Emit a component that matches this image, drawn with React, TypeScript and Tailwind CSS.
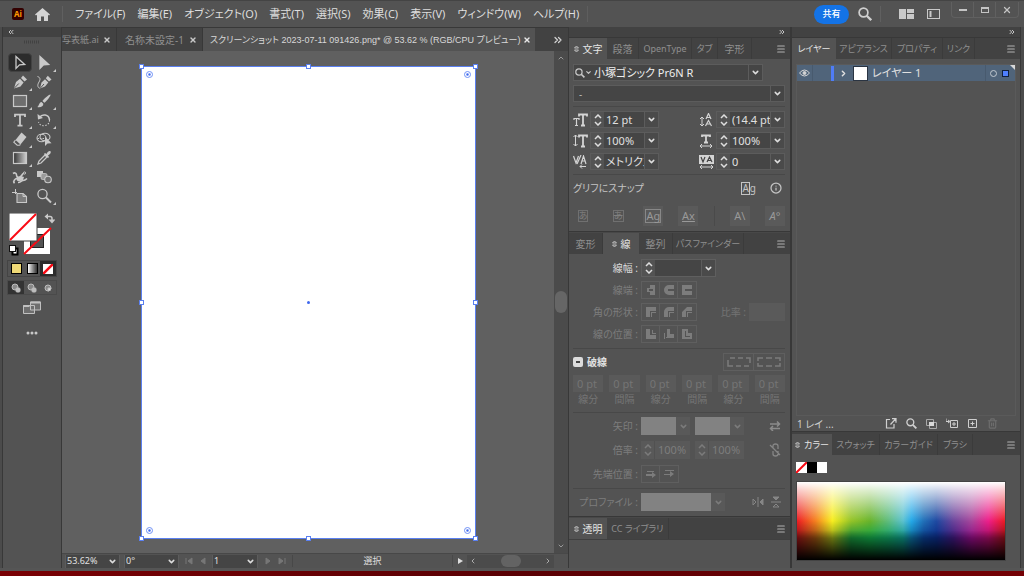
import React from 'react'
import {
  ChevronDown,
  ChevronLeft,
  ChevronRight,
  ChevronUp,
  ChevronsLeft,
  ChevronsRight,
  Info,
  Menu,
  Trash2,
  X
} from 'lucide-react'

const MENU_ITEMS = [
  'ファイル(F)',
  '編集(E)',
  'オブジェクト(O)',
  '書式(T)',
  '選択(S)',
  '効果(C)',
  '表示(V)',
  'ウィンドウ(W)',
  'ヘルプ(H)'
]

const Magnifier: React.FC<{ className: string }> = ({ className }) => (
  <svg viewBox="0 0 14 14" className={className} fill="none" stroke="currentColor" strokeWidth="1.700">
    <circle cx="5.500" cy="5.500" r="4.400" />
    <path d="M8.700 8.700l4.500 4.500" strokeWidth="2.300" />
  </svg>
)

interface ToolIconProps {
  name: string
}

const ToolIcon: React.FC<ToolIconProps> = ({ name }) => (
  <svg viewBox="0 0 16 16" className="w-4 h-4" fill="none" stroke="#c9c9c9" strokeWidth="1.3">
    {name === 'select' && <path d="M4 1.5v12l3.5-3.6 5.2-.4z" />}
    {name === 'direct' && <path d="M4 1.5v12l3.5-3.6 5.2-.4z" fill="#c9c9c9" />}
    {name === 'pen' && (
      <>
        <path d="M2 14.5L4 8l4-3.2 3.6 3.6L8.500 12.5z" fill="#c9c9c9" stroke="none" />
        <path d="M9 4l2-2.500 4 4L12.500 7.500z" fill="#c9c9c9" stroke="none" />
        <path d="M2 14.500L6.800 9.500" stroke="#535353" strokeWidth="1" />
      </>
    )}
    {name === 'curve' && (
      <>
        <path d="M4 14.500L5.500 8.500l3.500-3.200 3.300 3.300-3.300 3.800z" fill="#c9c9c9" stroke="none" />
        <path d="M9.800 4.300l2-2.500 3.700 3.700-2.500 2z" fill="#c9c9c9" stroke="none" />
        <path d="M1.500 2.500c3 1 3 3 1.500 5.500s-2 5 1 6.500" strokeWidth="1" />
        <path d="M4 14.500L8 10" stroke="#535353" strokeWidth="1" />
      </>
    )}
    {name === 'rect' && <rect x="1.500" y="2.500" width="13" height="11" fill="#6e6e6e" strokeWidth="1.200" />}
    {name === 'brush' && (
      <>
        <path d="M14.500 1.500c-1-.6-7.500 5-8 6.500l1.800 1.800C10 9 15.300 2.500 14.500 1.500z" fill="#c9c9c9" stroke="none" />
        <path d="M5.600 9l1.700 1.700c.3 2.500-2.600 4-6 3.300 2-1 1.500-4.500 4.300-5z" fill="#c9c9c9" stroke="none" />
      </>
    )}
    {name === 'type' && <path d="M3 5V2.700h10V5M8 2.700v11M5.500 13.700h5" strokeWidth="1.800" />}
    {name === 'rotate' && (
      <>
        <path d="M3.500 5.500C6 1.500 13 2 13.500 8" strokeWidth="1.500" />
        <path d="M1.500 2l.5 5.500 5-1.500z" fill="#c9c9c9" stroke="none" />
        <path d="M13.500 8c0 7-9.500 7.500-11 2" strokeDasharray="1.500 1.500" strokeWidth="1.100" />
      </>
    )}
    {name === 'eraser' && (
      <>
        <path d="M9.500 1.500l5 4.500-6 7.500-5-4.500z" fill="#c9c9c9" stroke="none" />
        <path d="M3.500 9L1.800 11.200l3.400 3h2.200L8.500 13.500" strokeWidth="1.100" />
      </>
    )}
    {name === 'shape' && (
      <>
        <ellipse cx="5.500" cy="7" rx="4.500" ry="3.700" strokeWidth="1.100" />
        <ellipse cx="9" cy="6" rx="5" ry="3.700" strokeWidth="1.100" />
        <path d="M1.500 7.500h10" strokeWidth="1" strokeDasharray="1.500 1" />
        <path d="M9 5.500v9.500l2.500-2.600 4-.2z" fill="#c9c9c9" stroke="none" />
      </>
    )}
    {name === 'gradient' && (
      <>
        <defs>
          <linearGradient id="tool-gradient">
            <stop offset="0" stopColor="#333" />
            <stop offset="1" stopColor="#d0d0d0" />
          </linearGradient>
        </defs>
        <rect x="1.500" y="2.500" width="13" height="11" fill="url(#tool-gradient)" strokeWidth="1.200" />
      </>
    )}
    {name === 'dropper' && (
      <>
        <path d="M2 14l1-3 6-6 2 2-6 6z" />
        <path d="M8 4l4 4 1-1-1-1.500c2-1 3.500-3 2.500-4.200S11 2.200 10.500 4L9 3z" fill="#c9c9c9" stroke="none" />
      </>
    )}
    {name === 'puppet' && (
      <>
        <path d="M1 4.500c2-1.500 3.500 0 3.500 1.500S6 9 8 8s2-3 3.500-3.500M1.500 13c1-3 3-4 5-4M6 13.500c3 0 3-2 5-2s3-1 4-2" strokeWidth="1.600" />
        <path d="M4 9.500c2-2 5-2.500 8-1.500l-1 3c-2 1-5 1.500-6 .5z" fill="#c9c9c9" stroke="none" />
        <circle cx="12.500" cy="4" r="1.100" strokeWidth="1" />
        <circle cx="2" cy="13.500" r="1" fill="#c9c9c9" stroke="none" />
      </>
    )}
    {name === 'blend' && (
      <>
        <rect x="1" y="2" width="6" height="6" fill="#c9c9c9" stroke="none" />
        <rect x="5" y="4.500" width="6" height="6" rx="1.500" fill="#9a9a9a" strokeWidth=".8" />
        <circle cx="12" cy="10.500" r="3.300" fill="#6e6e6e" strokeWidth="1.100" />
      </>
    )}
    {name === 'artboard' && (
      <>
        <path d="M0 4.500h5M3.500 1v5" strokeWidth="1" />
        <path d="M5 5.500h6l3.500 3v6H5z" fill="#7d7d7d" strokeWidth="1.100" />
        <path d="M11 5.500v3h3.500" strokeWidth="1" />
      </>
    )}
    {name === 'zoom' && (
      <>
        <circle cx="6.500" cy="6" r="4.600" />
        <path d="M10 9.500l5 5" strokeWidth="2" />
      </>
    )}
  </svg>
)

const TOOLS = [
  { icon: 'select', label: '選択ツール', more: false },
  { icon: 'direct', label: 'ダイレクト選択ツール', more: true },
  { icon: 'pen', label: 'ペンツール', more: true },
  { icon: 'curve', label: '曲線ツール', more: false },
  { icon: 'rect', label: '長方形ツール', more: true },
  { icon: 'brush', label: 'ブラシツール', more: true },
  { icon: 'type', label: '文字ツール', more: true },
  { icon: 'rotate', label: '回転ツール', more: true },
  { icon: 'eraser', label: '消しゴムツール', more: true },
  { icon: 'shape', label: 'シェイプ形成ツール', more: false },
  { icon: 'gradient', label: 'グラデーションツール', more: true },
  { icon: 'dropper', label: 'スポイトツール', more: false },
  { icon: 'puppet', label: 'パペットワープツール', more: false },
  { icon: 'blend', label: 'ブレンドツール', more: false },
  { icon: 'artboard', label: 'アートボードツール', more: false },
  { icon: 'zoom', label: 'ズームツール', more: true }
]

const Toolbar: React.FC = () => (
  <aside className="w-[60px] shrink-0 bg-[#535353] border-x border-[#383838] flex flex-col">
    <div className="h-[10px] bg-[#424242] flex items-center pl-1">
      <ChevronsLeft className="w-2 h-2 text-[#c8c8c8]" strokeWidth={3} />
    </div>
    <div className="h-4 flex justify-center pt-[3px]">
      <svg width="16" height="4" fill="none" stroke="#424242" strokeDasharray="1 1" strokeWidth="3">
        <path d="M0 2h16" />
      </svg>
    </div>
    <div className="grid grid-cols-[24px_24px] pl-[5px]">
      {TOOLS.map((tool, i) => (
        <button
          key={tool.icon}
          aria-label={tool.label}
          className={
            i === 0
              ? 'relative h-[19px] flex items-center justify-center bg-[#2c2c2c] rounded-sm border border-[#424242]'
              : 'relative h-[19px] flex items-center justify-center'
          }
        >
          <ToolIcon name={tool.icon} />
          {tool.more && (
            <svg className="absolute right-0 bottom-0" width="3" height="3">
              <path d="M3 0v3H0z" fill="#c9c9c9" />
            </svg>
          )}
        </button>
      ))}
    </div>

    {/* Fill and stroke */}
    <div className="pl-[6px] pt-2">
      <button aria-label="塗りと線" className="block">
        <svg width="46" height="43" fill="none">
          <rect x="14.500" y="14.500" width="27" height="27" fill="#fff" stroke="#535353" />
          <rect x="21.500" y="21.500" width="13" height="13" fill="#535353" stroke="#222" />
          <path d="M15 41L42 15" stroke="#fa0a14" strokeWidth="2" />
          <rect x="0" y="0" width="28" height="28" fill="#fff" stroke="#444" />
          <path d="M1 27L27 1" stroke="#fa0a14" strokeWidth="2" />
          <path d="M38 3.500h3q2 0 2 2v2" stroke="#c9c9c9" strokeWidth="1.500" />
          <path d="M39 .5v6l-3.500-3zM39.500 6.500h7L43 10.500z" fill="#c9c9c9" />
          <path d="M3.500 35.500h5v6h-5z" fill="#fff" stroke="#000" strokeWidth="2" />
          <rect x=".5" y="32.500" width="6" height="6" fill="#fff" stroke="#111" />
        </svg>
      </button>
    </div>
    <div className="mx-1 mt-1 h-[17px] grid grid-cols-3 border border-[#444]">
      <button aria-label="カラー" className="flex items-center justify-center">
        <span className="w-[11px] h-[11px] bg-[#efd976] border border-black" />
      </button>
      <button aria-label="グラデーション" className="flex items-center justify-center">
        <span className="w-[11px] h-[11px] bg-linear-to-r from-white to-[#333] border border-black" />
      </button>
      <button aria-label="なし" className="flex items-center justify-center bg-[#2c2c2c]">
        <svg width="10" height="10">
          <rect width="10" height="10" fill="#fff" />
          <path d="M0 10L10 0" stroke="#fa0a14" strokeWidth="2.500" />
        </svg>
      </button>
    </div>
    <div className="mx-1 mt-[3px] h-[15px] grid grid-cols-3 border border-[#4a4a4a]">
      {['標準描画', '背面描画', '内側描画'].map((label, i) => (
        <button
          key={label}
          aria-label={label}
          className={i === 0 ? 'flex items-center justify-center bg-[#333]' : 'flex items-center justify-center'}
        >
          <svg width="10" height="10" fill="#888" stroke="#bdbdbd">
            <circle cx={i === 2 ? 5 : 4} cy={i === 2 ? 5 : 4} r="3" />
            {i === 2 ? <path d="M5 5h3a3 3 0 0 1-3 3z" fill="#ddd" /> : <rect x="5" y="5" width="4" height="4" rx="1" fill="#bdbdbd" />}
          </svg>
        </button>
      ))}
    </div>
    <button aria-label="スクリーンモード" className="mt-[6px] flex justify-center">
      <svg width="18" height="14" fill="#6e6e6e" stroke="#c0c0c0">
        <path d="M.5 4.500h11v8H.5zM7.500 1h10v8h-10z" />
        <path d="M.5 5h6M7.500 1.500h10" strokeWidth="2" />
      </svg>
    </button>
    <button aria-label="ツールバーを編集" className="mt-4 flex justify-center">
      <svg width="12" height="4" fill="#c9c9c9">
        <circle cx="2" cy="2" r="1.500" />
        <circle cx="6" cy="2" r="1.500" />
        <circle cx="10" cy="2" r="1.500" />
      </svg>
    </button>
  </aside>
)

const Handle: React.FC<{ className: string }> = ({ className }) => (
  <span className={`absolute w-[5px] h-[5px] bg-white border border-[#5b80f0] ${className}`} />
)

const CornerWidget: React.FC<{ className: string }> = ({ className }) => (
  <svg className={`absolute ${className}`} width="7" height="7" fill="none" stroke="#6f90f5">
    <circle cx="3.500" cy="3.500" r="3" />
    <circle cx="3.500" cy="3.500" r="1" fill="#3f68ee" />
  </svg>
)

const StatusSelect: React.FC<{ label: string; value: string; width: string }> = ({ label, value, width }) => (
  <div className={`grid items-center h-[13px] bg-[#454545] border-x border-[#5c5c5c] ${width}`}>
    <select aria-label={label} className="[grid-area:1/1] appearance-none w-full h-[13px] pl-[1px] text-[9px] leading-3 text-[#e0e0e0] outline-none">
      <option>{value}</option>
    </select>
    <ChevronDown className="[grid-area:1/1] justify-self-end mr-[2px] w-[9px] h-[9px] text-[#ddd] pointer-events-none" strokeWidth={4} />
  </div>
)

const NavIcon: React.FC<{ label: string; d: string }> = ({ label, d }) => (
  <button aria-label={label} className="w-[14px] flex justify-center">
    <svg width="8" height="8" fill="#777" stroke="#777">
      <path d={d} />
    </svg>
  </button>
)

const DocumentArea: React.FC = () => (
  <main className="flex-1 min-w-0 flex flex-col bg-[#424242]">
    <div role="tablist" className="h-6 flex items-stretch text-[10px] leading-4 text-[#909090] border-t border-[#383838]">
      <div className="w-[55px] shrink-0 flex items-center justify-between pr-[5px] border-r border-[#383838]">
        <button role="tab" aria-selected={false} className="whitespace-nowrap text-[9px]">
          写表紙.ai
        </button>
        <X className="w-2 h-2 text-[#c8c8c8]" strokeWidth={4} />
      </div>
      <div className="w-[86px] shrink-0 flex items-center justify-between pl-2 pr-[5px] border-r border-[#383838]">
        <button role="tab" aria-selected={false} className="whitespace-nowrap">
          名称未設定-1
        </button>
        <X className="w-2 h-2 text-[#c8c8c8]" strokeWidth={4} />
      </div>
      <div className="w-[332px] shrink-0 flex items-center justify-between pl-[7px] pr-1 bg-[#535353] text-[#d8d8d8]">
        <button role="tab" aria-selected className="whitespace-nowrap text-[9px] font-['Liberation_Sans','Noto_Sans_CJK_JP',sans-serif]">
          スクリーンショット 2023-07-11 091426.png* @ 53.62 % (RGB/CPU プレビュー)
        </button>
        <X className="w-2 h-2 shrink-0 text-[#e8e8e8]" strokeWidth={4} />
      </div>
      <button aria-label="その他のドキュメント" className="flex-1 flex items-center justify-end pr-1">
        <ChevronsRight className="w-3 h-3 text-[#d0d0d0]" strokeWidth={2.5} />
      </button>
    </div>

    <div className="flex-1 flex">
      <div className="flex-1 bg-[#606060] flex items-center justify-center">
        {/* Artboard with its selection bounds */}
        <div className="relative w-[335px] h-[473px] bg-white border border-[#5b80f0]">
          <Handle className="-left-[3px] -top-[3px]" />
          <Handle className="left-[164px] -top-[3px]" />
          <Handle className="-right-[3px] -top-[3px]" />
          <Handle className="-left-[3px] top-[233px]" />
          <Handle className="-right-[3px] top-[233px]" />
          <Handle className="-left-[3px] -bottom-[3px]" />
          <Handle className="left-[164px] -bottom-[3px]" />
          <Handle className="-right-[3px] -bottom-[3px]" />
          <CornerWidget className="left-1 top-1" />
          <CornerWidget className="right-1 top-1" />
          <CornerWidget className="left-1 bottom-1" />
          <CornerWidget className="right-1 bottom-1" />
          <span className="absolute left-[165px] top-[234px] w-[3px] h-[3px] rounded-full bg-[#3f68ee]" />
        </div>
      </div>
      <div className="w-[14px] bg-[#4b4b4b] flex flex-col items-center justify-between py-[3px]">
        <ChevronUp className="w-2 h-2 text-[#999]" strokeWidth={3} />
        <div className="w-3 h-[22px] rounded-full bg-[#666]" />
        <ChevronDown className="w-2 h-2 text-[#999]" strokeWidth={3} />
      </div>
    </div>

    <div className="h-[15px] bg-[#535353] border-t border-[#484848] flex items-center pl-[3px]">
      <StatusSelect label="ズーム" value="53.62%" width="w-[55px]" />
      <StatusSelect label="回転" value="0°" width="w-[55px] ml-1" />
      <div className="flex w-[33px] justify-center">
        <NavIcon label="最初" d="M1 1v6M7 1L3 4l4 3z" />
        <NavIcon label="前へ" d="M6 1L2 4l4 3z" />
      </div>
      <StatusSelect label="アートボード" value="1" width="w-[46px]" />
      <div className="flex w-[34px] justify-center">
        <NavIcon label="次へ" d="M2 1l4 3-4 3z" />
        <NavIcon label="最後" d="M1 1l4 3-4 3zM7 1v6" />
      </div>
      <div className="flex-1 text-center text-[9px] leading-3 text-[#dcdcdc] border-x border-[#484848]">選択</div>
      <button aria-label="表示項目" className="w-[14px] flex justify-center">
        <svg width="6" height="8" fill="#ddd">
          <path d="M1 1l5 3-5 3z" />
        </svg>
      </button>
      <div className="w-[87px] h-[13px] bg-[#4b4b4b] flex items-center justify-between px-[2px]">
        <ChevronLeft className="w-2 h-2 text-[#aaa]" strokeWidth={3} />
        <div className="w-5 h-3 rounded-full bg-[#636363]" />
        <ChevronRight className="w-2 h-2 text-[#aaa]" strokeWidth={3} />
      </div>
      <div className="w-[14px]" />
    </div>
  </main>
)

interface PanelTab {
  label: string
  width: string
  active?: boolean
  updown?: boolean
  small?: boolean
}

const UpDown: React.FC = () => (
  <svg width="5" height="8" fill="none" stroke="#c8c8c8">
    <path d="M.5 3l2-2 2 2zM.5 5l2 2 2-2z" strokeWidth=".9" />
  </svg>
)

const PanelTabs: React.FC<{ tabs: PanelTab[] }> = ({ tabs }) => (
  <div className="h-[21px] shrink-0 bg-[#424242] flex items-stretch">
    <div role="tablist" className="flex items-stretch">
      {tabs.map(tab => (
        <button
          key={tab.label}
          role="tab"
          aria-selected={!!tab.active}
          className={`flex items-center justify-center gap-1 whitespace-nowrap leading-4 ${tab.width} ${
            tab.small ? 'text-[9px]' : 'text-[10px]'
          } ${tab.active ? 'bg-[#535353] text-[#e4e4e4]' : 'text-[#8f8f8f] border-r border-[#3b3b3b]'}`}
        >
          {tab.updown && <UpDown />}
          {tab.label}
        </button>
      ))}
    </div>
    <button aria-label="パネルメニュー" className="ml-auto mr-1 flex items-center">
      <Menu className="w-[10px] h-[10px] text-[#b0b0b0]" strokeWidth={2.5} />
    </button>
  </div>
)

const Spinner: React.FC<{ dim?: boolean }> = ({ dim = false }) => (
  <button
    aria-label="増減"
    className={`w-[13px] shrink-0 flex items-center justify-center ${dim ? 'text-[#7b7b7b]' : 'text-[#dedede]'}`}
  >
    <svg width="8" height="12" fill="none" stroke="currentColor" strokeWidth="1.500">
      <path d="M1 4l3-3 3 3M1 8l3 3 3-3" />
    </svg>
  </button>
)

const DropButton: React.FC<{ dim?: boolean }> = ({ dim = false }) => (
  <button
    aria-label="一覧を開く"
    className={`w-[14px] shrink-0 flex items-center justify-center ${
      dim ? 'text-[#7b7b7b]' : 'bg-[#4a4a4a] text-[#dedede] border-l border-[#5c5c5c]'
    }`}
  >
    <ChevronDown className="w-[9px] h-[9px]" strokeWidth={4} />
  </button>
)

const CharField: React.FC<{ icon: React.ReactNode; label: string; value: string }> = ({ icon, label, value }) => (
  <div className="flex items-center gap-[2px]">
    <svg width="15" height="14" className="shrink-0 text-[#d4d4d4]" fill="none" stroke="currentColor">
      {icon}
    </svg>
    <div className="flex h-[17px] border border-[#5c5c5c]">
      <Spinner />
      <input aria-label={label} defaultValue={value} className="w-10 pl-[2px] bg-[#454545] text-[11px] leading-4 text-[#e0e0e0] outline-none" />
      <DropButton />
    </div>
  </div>
)

const BIG_T = 'M6 3.500V1.500h8v2M10 1.500v10.500M8 12.500h4'

const CharacterPanel: React.FC = () => (
  <section className="bg-[#535353] pl-1 pr-[5px] pt-[5px] h-[173px] border-b border-[#383838]">
    <div className="w-[190px] h-[17px] flex items-center border border-[#5c5c5c] bg-[#454545]">
      <Magnifier className="w-[10px] h-[10px] ml-[1px] text-[#c8c8c8]" />
      <ChevronDown className="w-[7px] h-[7px] text-[#c8c8c8]" strokeWidth={4} />
      <select aria-label="フォントファミリ" className="appearance-none flex-1 pl-[2px] text-[11px] leading-4 text-[#eee] outline-none">
        <option>小塚ゴシック Pr6N R</option>
      </select>
      <span className="h-full w-[14px] flex items-center justify-center border-l border-[#5c5c5c]">
        <ChevronDown className="w-[9px] h-[9px] text-[#ddd]" strokeWidth={4} />
      </span>
    </div>
    <div className="mt-1 h-[17px] flex items-center border border-[#5c5c5c] bg-[#454545]">
      <select aria-label="フォントスタイル" className="appearance-none flex-1 pl-[5px] text-[10px] leading-4 text-[#bbb] outline-none">
        <option>-</option>
      </select>
      <span className="h-full w-[14px] flex items-center justify-center border-l border-[#5c5c5c]">
        <ChevronDown className="w-[9px] h-[9px] text-[#ddd]" strokeWidth={4} />
      </span>
    </div>
    <div className="mt-1 pt-1 border-t border-[#484848] grid grid-cols-[auto_auto] justify-between gap-y-1">
      <CharField
        label="フォントサイズ"
        value="12 pt"
        icon={<><path d={BIG_T} strokeWidth="1.800" /><path d="M1 7V5.500h5V7M3.500 5.500v7M2 12.500h3" strokeWidth="1.200" /></>}
      />
      <CharField
        label="行送り"
        value="(14.4 pt)"
        icon={<><path d="M3 4v9M1 6l2-2 2 2M1 11l2 2 2-2" /><path d="M7 6l2.500-5.500L12 6M8 4.500h3M6.500 13l3-5.500 3 5.500M7.500 11h4" strokeWidth="1.200" /></>}
      />
      <CharField
        label="垂直比率"
        value="100%"
        icon={<><path d={BIG_T} strokeWidth="1.800" /><path d="M2.500 1v11M.5 3l2-2 2 2M.5 10l2 2 2-2" /></>}
      />
      <CharField
        label="水平比率"
        value="100%"
        icon={<><path d="M3 3V1.500h8V3M7 1.500v7M5 8.500h4" strokeWidth="1.800" /><path d="M1 12h12M3 10l-2 2 2 2M11 10l2 2-2 2" /></>}
      />
      <CharField
        label="カーニング"
        value="メトリクス"
        icon={<><path d="M.5 1L3 8l2.500-7M4 9l4-9M8 9l2.500-8L13 9M9 6h3.500" strokeWidth="1.200" /><path d="M7 11.500h6M9 9.500l-2 2 2 2" /></>}
      />
      <CharField
        label="トラッキング"
        value="0"
        icon={<><rect x=".5" y=".5" width="14" height="8" fill="currentColor" /><path d="M2 2l2 5 2-5M8 7l2.500-5L13 7M9 5.500h3" stroke="#444" strokeWidth="1.200" /><path d="M1 12h13M3 10l-2 2 2 2M12 10l2 2-2 2" /></>}
      />
    </div>
    <div className="mt-1 pt-[5px] border-t border-[#484848] flex items-center text-[10px] leading-4 text-[#c4c4c4]">
      <span className="flex-1">グリフにスナップ</span>
      <button aria-label="グリフの境界" className="mr-[14px] flex items-center text-[10px] leading-[11px]">
        <span className="border border-[#c4c4c4]">A</span>g
      </button>
      <button aria-label="情報" className="mr-[3px]">
        <Info className="w-3 h-3" strokeWidth={2.5} />
      </button>
    </div>
    <div className="mt-[10px] h-5 flex items-center justify-between text-[11px] leading-4 text-[#808080]">
      <button className="w-5 h-5 flex items-center justify-center text-[9px]">
        <span className="border border-[#707070] leading-[10px]">あ</span>
      </button>
      <button className="w-5 h-5 flex items-center justify-center text-[9px]">
        <span className="border border-[#707070] leading-[10px] line-through">あ</span>
      </button>
      <button className="w-5 h-5 flex items-center justify-center bg-[#5a5a5a] text-[#999]">
        <span className="border border-[#888] leading-3">Ag</span>
      </button>
      <button className="w-5 h-5 bg-[#5a5a5a] text-[#999] underline">Ax</button>
      <span className="w-px h-5 bg-[#4a4a4a]" />
      <button className="w-5 h-5 bg-[#5a5a5a] text-[#999]">A\</button>
      <button className="w-5 h-5 bg-[#5a5a5a] text-[#999] italic">A°</button>
    </div>
  </section>
)

const RowLabel: React.FC<{ children: React.ReactNode; bright?: boolean; htmlFor?: string }> = ({
  children,
  bright = false,
  htmlFor
}) => (
  <label
    htmlFor={htmlFor}
    className={`w-[65px] shrink-0 text-right whitespace-nowrap text-[10px] leading-4 ${bright ? 'text-[#dcdcdc]' : 'text-[#7d7d7d]'}`}
  >
    {children} :
  </label>
)

const IconGroup: React.FC<{ icons: string[]; label: string }> = ({ icons, label }) => (
  <div className="flex shrink-0 h-[18px] border border-[#5f5f5f] divide-x divide-[#5f5f5f]">
    {icons.map((d, i) => (
      <button key={d} aria-label={`${label} ${i + 1}`} className="w-[18px] flex items-center justify-center">
        <svg width="10" height="10" fill="#7c7c7c" fillRule="evenodd">
          <path d={d} />
        </svg>
      </button>
    ))}
  </div>
)

const ScaleField: React.FC<{ id: string }> = ({ id }) => (
  <div className="flex w-[49px] h-[18px] bg-[#595959]">
    <Spinner dim />
    <input id={id} aria-label="倍率" defaultValue="100%" className="w-9 pl-[3px] text-[11px] leading-4 text-[#7d7d7d] border-l border-[#515151] outline-none" />
  </div>
)

const StrokePanel: React.FC = () => (
  <section className="bg-[#535353] pl-1 pr-[5px] pt-[5px] h-[263px] border-b border-[#383838]">
    <div className="flex flex-col gap-1">
      <div className="flex items-center gap-[3px]">
        <RowLabel bright htmlFor="stroke-width">線幅</RowLabel>
        <div className="flex h-[18px] border border-[#5f5f5f]">
          <Spinner />
          <input id="stroke-width" className="w-[46px] bg-[#454545] text-[11px] outline-none" />
          <DropButton />
        </div>
      </div>
      <div className="flex items-center gap-[3px]">
        <RowLabel>線端</RowLabel>
        <IconGroup
          label="線端"
          icons={[
            'M4 0h5v10H4V7H1V3h3zM3 4v2h4V4z',
            'M5 0h5v10H5A5 5 0 0 1 5 0zM4 4v2h6V4z',
            'M0 0h10v10H0zM3 4v2h7V4z'
          ]}
        />
      </div>
      <div className="flex items-center gap-[3px]">
        <RowLabel>角の形状</RowLabel>
        <IconGroup
          label="角の形状"
          icons={[
            'M0 0h10v6H6v4H0zM4 4v1h6V4zM4 5v5h1V5z',
            'M5 0h5v6H6v4H0V5A5 5 0 0 1 5 0zM4 4v1h6V4zM4 5v5h1V5z',
            'M5 0h5v6H6v4H0V5zM4 4v1h6V4zM4 5v5h1V5z'
          ]}
        />
        <label htmlFor="miter" className="ml-auto shrink-0 whitespace-nowrap text-[10px] leading-4 text-[#747474]">
          比率 :
        </label>
        <input id="miter" className="w-9 h-[18px] bg-[#5a5a5a] outline-none" />
      </div>
      <div className="flex items-center gap-[3px]">
        <RowLabel>線の位置</RowLabel>
        <IconGroup
          label="線の位置"
          icons={[
            'M0 0h4v6h6v4H0zM6 1h1v3h3v1H6z',
            'M3 0h3v5h4v4H2V8h1zM0 4h1v6h-1z',
            'M0 0h6v4h4v6H0zM3 2h1v5h4v1H3z'
          ]}
        />
      </div>
    </div>

    {/* Dashed line */}
    <div className="mt-[5px] pt-1 border-t border-[#484848]">
      <div className="flex items-center justify-between h-[18px]">
        <label className="flex items-center gap-1 text-[10px] leading-4 font-semibold text-[#e0e0e0]">
          <span className="grid place-items-center">
            <input type="checkbox" className="[grid-area:1/1] appearance-none w-[10px] h-[10px] rounded-[2px] bg-[#dcdcdc]" />
            <span className="[grid-area:1/1] w-1 h-[2px] bg-[#444] pointer-events-none" />
          </span>
          破線
        </label>
        <div className="flex h-[18px] border border-[#5f5f5f] divide-x divide-[#5f5f5f]">
          {['線分と間隔の正確な長さ', 'コーナーに合わせる'].map((label, i) => (
            <button key={label} aria-label={label} className="w-[30px] flex items-center justify-center">
              <svg width="24" height="10" fill="none" stroke="#7c7c7c" strokeWidth="1.500">
                {i === 0 ? (
                  <path d="M1 5V9h5M1 6V3M3 1h5M11 1h5M19 1h4v5M9 9h5M17 9h5" />
                ) : (
                  <path d="M1 4V1h5M9 1h6M18 1h5v3M1 6v3h5M9 9h6M18 9h5V6" />
                )}
              </svg>
            </button>
          ))}
        </div>
      </div>
      <div className="mt-1 grid grid-cols-6 gap-[6px]">
        {['線分', '間隔', '線分', '間隔', '線分', '間隔'].map((label, i) => (
          <label key={i} className="flex flex-col items-center text-[10px] leading-[14px] text-[#757575]">
            <input defaultValue="0 pt" className="w-full h-[17px] pl-1 bg-[#5a5a5a] text-[11px] leading-4 text-[#757575] outline-none" />
            {label}
          </label>
        ))}
      </div>
    </div>

    {/* Arrowheads */}
    <div className="mt-[6px] pt-1 border-t border-[#484848] flex flex-col gap-[6px]">
      <div className="flex items-center gap-[3px]">
        <RowLabel>矢印</RowLabel>
        <div className="flex w-[49px] h-[18px] bg-[#595959]">
          <span className="flex-1 bg-[#828282]" />
          <DropButton dim />
        </div>
        <div className="ml-[2px] flex w-[49px] h-[18px] bg-[#595959]">
          <span className="flex-1 bg-[#828282]" />
          <DropButton dim />
        </div>
        <button aria-label="矢印を入れ替え" className="ml-auto mr-1">
          <svg width="12" height="10" fill="none" stroke="#8c8c8c" strokeWidth="1.500">
            <path d="M1 3h9M8 .5L10.500 3 8 5.500M11 7.500H2M4 5L1.500 7.500 4 10" />
          </svg>
        </button>
      </div>
      <div className="flex items-center gap-[3px]">
        <RowLabel htmlFor="scale-start">倍率</RowLabel>
        <ScaleField id="scale-start" />
        <div className="ml-[2px]">
          <ScaleField id="scale-end" />
        </div>
        <button aria-label="倍率をリンク" className="ml-auto mr-1">
          <svg width="12" height="14" fill="none" stroke="#868686" strokeWidth="1.300">
            <path d="M4 6V3q0-2 2.500-2T9 3v3M4 8v3q0 2 2.500 2T9 11V8M1 2l10 10" />
          </svg>
        </button>
      </div>
      <div className="flex items-center gap-[3px]">
        <RowLabel>先端位置</RowLabel>
        <IconGroup label="先端位置" icons={['M1 2h7v1H1zM0 5h6V3l4 3-4 3V7H0z', 'M1 1h9v1H1zM0 5h6V2l4 3-4 3V6H0z']} />
      </div>
    </div>
    <div className="mt-[5px] pt-1 border-t border-[#484848] flex items-center gap-[3px]">
      <RowLabel>プロファイル</RowLabel>
      <div className="flex w-[84px] h-[18px] bg-[#595959]">
        <span className="flex-1 bg-[#828282]" />
        <DropButton dim />
      </div>
      <button aria-label="左右に反転" className="ml-auto mr-1">
        <svg width="12" height="10" fill="none" stroke="#868686">
          <path d="M1 2v6l3-3zM6 0v10" />
          <path d="M11 2v6L8 5z" fill="#868686" />
        </svg>
      </button>
      <button aria-label="上下に反転" className="mr-1">
        <svg width="10" height="12" fill="none" stroke="#868686">
          <path d="M2 1h6L5 4z" fill="#868686" />
          <path d="M0 6h10M2 11h6L5 8z" />
        </svg>
      </button>
    </div>
  </section>
)

const ColumnHeader: React.FC = () => (
  <div className="h-[11px] shrink-0 bg-[#424242] border-b border-[#383838] flex items-center justify-end pr-1">
    <ChevronsRight className="w-2 h-2 text-[#c8c8c8]" strokeWidth={3} />
  </div>
)

const LayersPanel: React.FC = () => (
  <section className="bg-[#535353] px-1 pt-[5px] flex-1 flex flex-col border-b border-[#383838]">
    <div className="flex-1 border border-[#5a5a5a]">
      <div className="h-4 flex items-center bg-[#50647a] text-[#e0e0e0]">
        <button aria-label="表示の切り替え" className="w-4 h-4 flex items-center justify-center border-r border-[#485a6e]">
          <svg width="11" height="8" fill="none" stroke="#d4d4d4">
            <path d="M.5 4Q5.500-2 10.500 4 5.500 10 .5 4z" />
            <circle cx="5.500" cy="4" r="1.500" fill="#d4d4d4" />
          </svg>
        </button>
        <span className="w-[18px] h-4" />
        <span className="w-[3px] h-[15px] bg-[#4f7cf7]" />
        <button aria-label="レイヤーを展開" className="w-[18px] flex justify-center">
          <ChevronRight className="w-[9px] h-[9px]" strokeWidth={4} />
        </button>
        <span className="w-[15px] h-[15px] ml-[1px] bg-white border border-[#2a3442]" />
        <span className="ml-1 flex-1 text-[11px] leading-4">レイヤー 1</span>
        <span className="relative w-[30px] h-4 flex items-center gap-[5px] pl-1 border-l border-[#485a6e]">
          <span className="w-[7px] h-[7px] rounded-full border border-[#c0c8d0]" />
          <span className="w-[7px] h-[7px] bg-[#4f80ff] border border-[#10203c]" />
          <svg className="absolute right-0 top-0" width="5" height="5">
            <path d="M0 0h5v5z" fill="#d8d8d8" />
          </svg>
        </span>
      </div>
    </div>
    <div className="h-[15px] flex items-center text-[#cfcfcf]">
      <span className="flex-1 pl-[1px] text-[10px] leading-3">1 レイ ...</span>
      <div className="flex items-center gap-[9px] pr-[18px]">
        <button aria-label="書き出し用に追加">
          <svg className="block" width="12" height="11" fill="none" stroke="currentColor" strokeWidth="1.200">
            <path d="M5 1.500H1.500v8.500H9V6M5.500 6.500L10.500 1M7 .7h4v4" />
          </svg>
        </button>
        <button aria-label="オブジェクトの位置">
          <Magnifier className="block w-[11px] h-[11px]" />
        </button>
        <button aria-label="クリッピングマスク">
          <svg className="block" width="11" height="11" fill="none" stroke="#a8a8a8">
            <path d="M.5 1.500h7v6h-7zM3.500 4.500h7v6h-7z" />
            <path d="M3 4h5v4H3z" fill="#d8d8d8" stroke="none" />
          </svg>
        </button>
        <button aria-label="サブレイヤーを作成">
          <svg className="block" width="12" height="11" fill="none" stroke="currentColor">
            <path d="M0 .5v3h3M2 2l2 1.500L2 5M4.500 2.500h7v7h-7zM8 4v4M6 6h4" />
          </svg>
        </button>
        <button aria-label="レイヤーを作成">
          <svg className="block" width="11" height="11" fill="none" stroke="currentColor">
            <path d="M1.500 1.500h8v8h-8zM5.500 3.500v4M3.500 5.500h4" />
          </svg>
        </button>
        <button aria-label="選択項目を削除">
          <Trash2 className="block w-[11px] h-[11px] text-[#6e6e6e]" strokeWidth={2.5} />
        </button>
      </div>
    </div>
  </section>
)

const HUES = [
  ['0%', '#ed1c24', '#8a1015'],
  ['9%', '#f58220', '#8a4a10'],
  ['17%', '#f8ee20', '#8c9a18'],
  ['26%', '#95c428', '#178a38'],
  ['35%', '#69b42c', '#12a045'],
  ['44%', '#60bd80', '#0f9a60'],
  ['51%', '#5cc2cf', '#0c9080'],
  ['55%', '#25a9e8', '#0b6a98'],
  ['61%', '#2270b8', '#083a88'],
  ['67%', '#1f4aa2', '#0a2a80'],
  ['75%', '#6a459c', '#3a1878'],
  ['84%', '#a8479c', '#8c0c80'],
  ['92%', '#ee1f8a', '#a00c60'],
  ['100%', '#ed1c24', '#8a1015']
]

const Spectrum: React.FC = () => (
  <svg viewBox="0 0 209 79" className="block w-[210px] h-[80px] border border-[#444]" preserveAspectRatio="none">
    <defs>
      <linearGradient id="hue">
        {HUES.map(([offset, color]) => (
          <stop key={offset} offset={offset} stopColor={color} />
        ))}
      </linearGradient>
      <linearGradient id="deep">
        {HUES.map(([offset, , color]) => (
          <stop key={offset} offset={offset} stopColor={color} />
        ))}
      </linearGradient>
      <linearGradient id="fade" x2="0" y2="1">
        <stop offset=".5" stopColor="#000" />
        <stop offset=".72" stopColor="#fff" />
      </linearGradient>
      <linearGradient id="tone" x2="0" y2="1">
        <stop offset="0" stopColor="#fff" />
        <stop offset=".1" stopColor="#fff" stopOpacity=".78" />
        <stop offset=".5" stopColor="#fff" stopOpacity="0" />
        <stop offset=".62" stopColor="#000" stopOpacity="0" />
        <stop offset="1" stopColor="#000" />
      </linearGradient>
      <mask id="lower">
        <rect width="209" height="79" fill="url(#fade)" />
      </mask>
    </defs>
    <rect width="209" height="79" fill="url(#hue)" />
    <rect width="209" height="79" fill="url(#deep)" mask="url(#lower)" />
    <rect width="209" height="79" fill="url(#tone)" />
  </svg>
)

const ColorPanel: React.FC = () => (
  <section className="bg-[#535353] px-1 pt-[7px] h-[113px] shrink-0">
    <div className="flex h-[11px]">
      <button aria-label="なし">
        <svg className="block" width="11" height="11">
          <rect width="11" height="11" fill="#fff" />
          <path d="M0 11L11 0" stroke="#fa0a14" strokeWidth="2" />
        </svg>
      </button>
      <button aria-label="ブラック" className="w-[10px] h-[11px] bg-black" />
      <button aria-label="ホワイト" className="w-[10px] h-[11px] bg-white" />
    </div>
    <div className="mt-2">
      <Spectrum />
    </div>
  </section>
)

export default function App() {
  return (
    <div className="min-h-screen flex flex-col bg-[#4b4b4b] font-['Noto_Sans','Noto_Sans_CJK_JP',sans-serif] [font-feature-settings:'palt']">
      <header className="h-[27px] bg-[#535353] flex items-center pl-3 pr-[5px] border-t border-[#444]">
        <svg width="12" height="12" className="rounded-[2px] bg-[#330000]">
          <text x="6" y="9" textAnchor="middle" fontSize="8" fontWeight="700" fill="#ff9a00">
            Ai
          </text>
        </svg>
        <button aria-label="ホーム" className="ml-[11px]">
          <svg className="block" width="15" height="13" fill="#d4d4d4">
            <path d="M7.500 0L15 6.500l-1 1-1-.7V13H9V8.500H6V13H2V6.800l-1 .7-1-1z" />
          </svg>
        </button>
        <span className="ml-3 w-px h-4 bg-[#606060]" />
        <nav className="ml-3 flex items-center gap-3 text-[11px] leading-4 text-[#dedede] whitespace-nowrap">
          {MENU_ITEMS.map(item => (
            <button key={item}>{item}</button>
          ))}
        </nav>
        <span className="ml-2 w-px h-4 bg-[#5e5e5e]" />
        <button className="ml-auto w-[35px] h-[19px] rounded-full bg-[#1473e6] text-white text-[9px] leading-4 font-medium">共有</button>
        <button aria-label="検索" className="ml-[9px]">
          <Magnifier className="block w-[14px] h-[14px] text-[#cfcfcf]" />
        </button>
        <span className="ml-2 w-px h-4 bg-[#606060]" />
        <button aria-label="ドキュメントレイアウト" className="ml-[18px]">
          <svg className="block" width="15" height="10" fill="#c9c9c9">
            <path d="M0 0h7v10H0zM8 0h7v4H8zM8 5h7v5H8z" />
          </svg>
        </button>
        <button aria-label="ワークスペース" className="ml-[13px]">
          <svg className="block" width="14" height="12" fill="none" stroke="#c9c9c9">
            <rect x=".5" y="1.500" width="12" height="9" />
            <path d="M3.500 3v6" strokeWidth="2" />
          </svg>
        </button>
        <div className="ml-[10px] -mt-2 h-4 flex items-center divide-x divide-[#606060] text-[#c4c4c4] border-x border-b border-[#606060] rounded-b">
          <button aria-label="最小化" className="w-[22px] h-4 flex items-center justify-center">
            <span className="w-2 h-[2px] bg-current" />
          </button>
          <button aria-label="最大化" className="w-[22px] h-4 flex items-center justify-center">
            <span className="w-2 h-[6px] border border-t-2 border-current" />
          </button>
          <button aria-label="閉じる" className="w-[22px] h-4 flex items-center justify-center">
            <X className="w-[10px] h-[10px]" strokeWidth={3} />
          </button>
        </div>
      </header>

      <div className="flex-1 flex pl-[2px] pr-[3px]">
        <Toolbar />
        <DocumentArea />

        <div className="w-[223px] shrink-0 flex flex-col border-x border-[#383838]">
          <ColumnHeader />
          <PanelTabs
            tabs={[
              { label: '文字', width: 'w-[38px]', active: true, updown: true },
              { label: '段落', width: 'w-8' },
              { label: 'OpenType', width: 'w-[53px]', small: true },
              { label: 'タブ', width: 'w-[26px]', small: true },
              { label: '字形', width: 'w-[34px]' }
            ]}
          />
          <CharacterPanel />
          <div className="h-[1px] bg-[#484848]" />
          <PanelTabs
            tabs={[
              { label: '変形', width: 'w-[34px]' },
              { label: '線', width: 'w-9', active: true, updown: true },
              { label: '整列', width: 'w-[34px]' },
              { label: 'パスファインダー', width: 'w-[71px]', small: true }
            ]}
          />
          <StrokePanel />
          <div className="h-[1px] bg-[#484848]" />
          <PanelTabs
            tabs={[
              { label: '透明', width: 'w-[38px]', active: true, updown: true },
              { label: 'CC ライブラリ', width: 'w-[62px]', small: true }
            ]}
          />
          <div className="flex-1 bg-[#535353] border-t border-[#404040]" />
        </div>

        <div className="w-[230px] shrink-0 flex flex-col border-x border-[#383838]">
          <ColumnHeader />
          <PanelTabs
            tabs={[
              { label: 'レイヤー', width: 'w-[44px]', active: true, small: true },
              { label: 'アピアランス', width: 'w-[56px]', small: true },
              { label: 'プロパティ', width: 'w-[51px]', small: true },
              { label: 'リンク', width: 'w-8', small: true }
            ]}
          />
          <LayersPanel />
          <div className="h-[2px] shrink-0 bg-[#424242]" />
          <PanelTabs
            tabs={[
              { label: 'カラー', width: 'w-10', active: true, updown: true, small: true },
              { label: 'スウォッチ', width: 'w-[48px]', small: true },
              { label: 'カラーガイド', width: 'w-[58px]', small: true },
              { label: 'ブラシ', width: 'w-[35px]', small: true }
            ]}
          />
          <ColorPanel />
        </div>
      </div>
      <div className="h-[3px] bg-[#555]" />
      <footer className="h-[5px] bg-linear-to-r from-[#7a0004] via-[#5a0004] to-[#740004]" />
    </div>
  )
}
